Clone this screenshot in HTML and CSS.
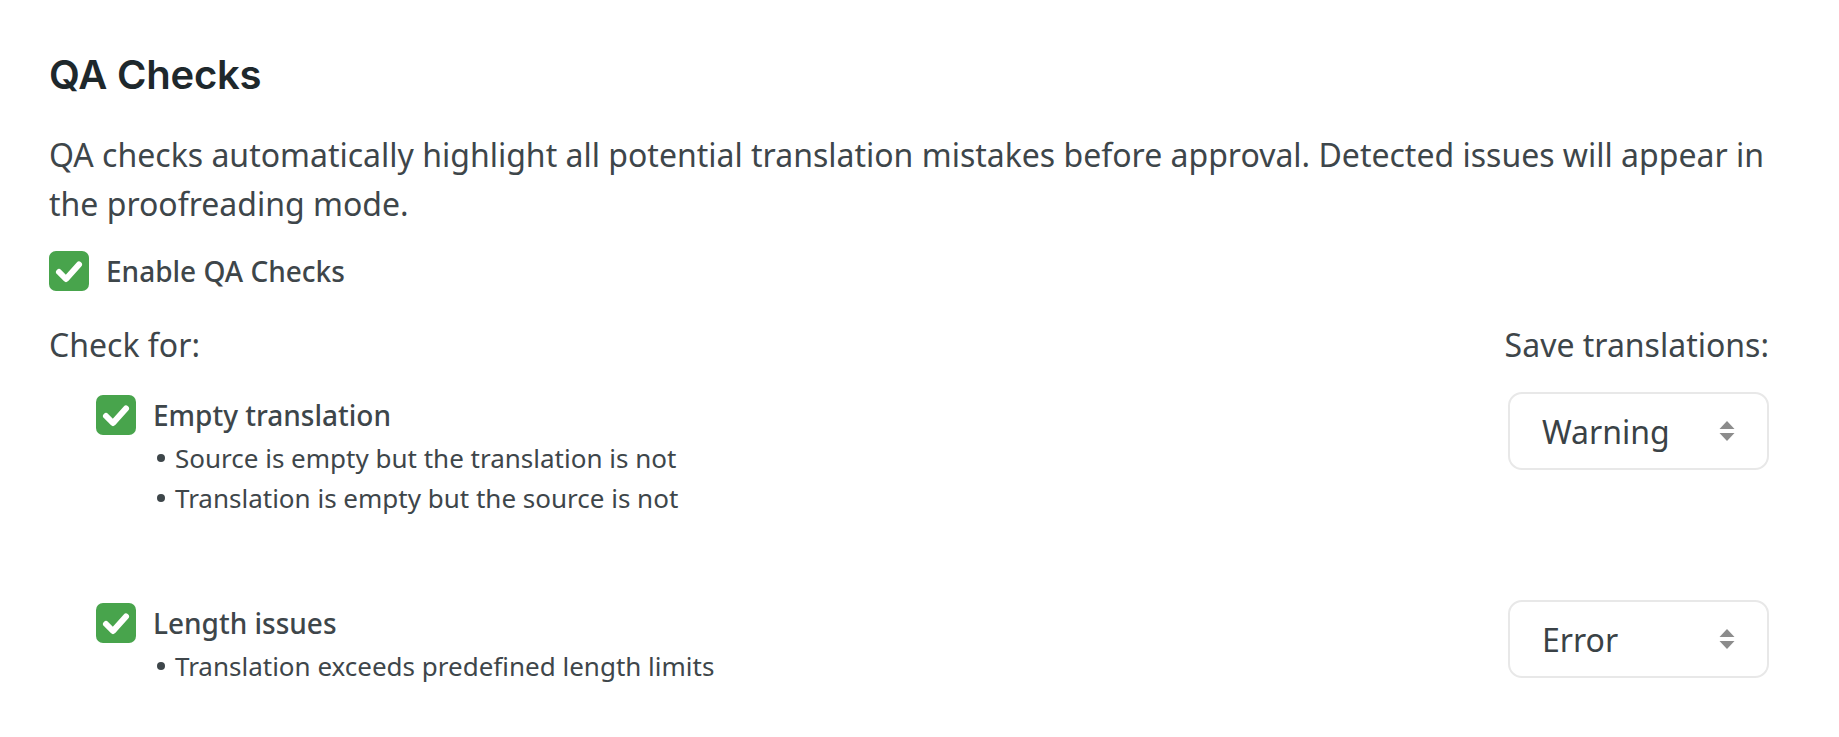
FILE: index.html
```html
<!DOCTYPE html>
<html lang="en">
<head>
    <meta charset="UTF-8">
    <meta name="viewport" content="width=device-width, initial-scale=1.0">
    <title>QA Checks</title>
    <link rel="stylesheet" href="styles.css">
</head>
<body>
    <div class="container">
        <h1>QA Checks</h1>
        <p class="intro">QA checks automatically highlight all potential translation mistakes before approval. Detected issues will appear in the proofreading mode.</p>

        <label class="check-row">
            <span class="checkbox">
                <svg viewBox="0 0 40 40" width="40" height="40"><path d="M10 21 L17 28 L30 13.5" fill="none" stroke="#fff" stroke-width="6" stroke-linecap="round" stroke-linejoin="round"/></svg>
            </span>
            <span class="check-label">Enable QA Checks</span>
        </label>

        <div class="rules">
            <div class="rules-head">Check for:</div>
            <div class="rules-head right">Save translations:</div>

            <div class="rule">
                <div class="rule-title">
                    <span class="checkbox">
                        <svg viewBox="0 0 40 40" width="40" height="40"><path d="M10 21 L17 28 L30 13.5" fill="none" stroke="#fff" stroke-width="6" stroke-linecap="round" stroke-linejoin="round"/></svg>
                    </span>
                    <span class="check-label">Empty translation</span>
                </div>
                <ul>
                    <li>Source is empty but the translation is not</li>
                    <li>Translation is empty but the source is not</li>
                </ul>
            </div>
            <div class="select">
                <span>Warning</span>
                <svg viewBox="0 0 16 22" width="16" height="22"><path d="M8 1 L15.5 9 H0.5 Z M8 21 L15.5 13 H0.5 Z" fill="#8c8c8c"/></svg>
            </div>

            <div class="rule">
                <div class="rule-title">
                    <span class="checkbox">
                        <svg viewBox="0 0 40 40" width="40" height="40"><path d="M10 21 L17 28 L30 13.5" fill="none" stroke="#fff" stroke-width="6" stroke-linecap="round" stroke-linejoin="round"/></svg>
                    </span>
                    <span class="check-label">Length issues</span>
                </div>
                <ul>
                    <li>Translation exceeds predefined length limits</li>
                </ul>
            </div>
            <div class="select">
                <span>Error</span>
                <svg viewBox="0 0 16 22" width="16" height="22"><path d="M8 1 L15.5 9 H0.5 Z M8 21 L15.5 13 H0.5 Z" fill="#8c8c8c"/></svg>
            </div>
        </div>
    </div>
</body>
</html>
```

FILE: styles.css
```css
body {
    margin: 0;
    background-color: #fff;
    font-family: "Noto Sans", "Open Sans", sans-serif;
    color: #3e464a;
}

.container {
    padding: 52px 70px 0 49px;
}

h1 {
    margin: 0;
    font-family: Inter, "Noto Sans", sans-serif;
    font-size: 40px;
    font-weight: 600;
    line-height: 46px;
    color: #1e282c;
    letter-spacing: -0.2px;
}

.intro {
    margin: 32px 0 0;
    font-size: 32px;
    line-height: 49px;
}

.check-row {
    display: flex;
    align-items: center;
    gap: 17px;
    margin-top: 20px;
}

.checkbox {
    display: flex;
    width: 40px;
    height: 40px;
    border-radius: 7px;
    background-color: #48a44c;
    flex-shrink: 0;
}

.check-label {
    font-size: 28px;
    font-weight: 500;
    line-height: 46px;
}

.rules {
    display: grid;
    grid-template-columns: 1fr auto;
    justify-items: start;
    align-items: start;
    row-gap: 27px;
    margin-top: 31px;
}

.rules-head {
    font-size: 32px;
    line-height: 40px;
}

.rules-head.right {
    justify-self: end;
}

.rule {
    padding-left: 47px;
    margin-bottom: 55px;
}

.rule-title {
    display: flex;
    align-items: center;
    gap: 17px;
}

ul {
    margin: 0;
    padding: 0 0 0 57px;
    list-style: none;
}

li {
    display: flex;
    align-items: center;
    gap: 10px;
    font-size: 26px;
    line-height: 40px;
}

li::before {
    content: "";
    width: 8px;
    height: 8px;
    border-radius: 50%;
    background-color: #3e464a;
    margin-left: 4px;
}

.select {
    justify-self: end;
    box-sizing: border-box;
    width: 261px;
    height: 78px;
    display: flex;
    align-items: center;
    justify-content: space-between;
    padding: 0 32px 0 32px;
    border: 2px solid #e8e8e8;
    border-radius: 14px;
    font-size: 32px;
    color: #3a4246;
}
```
